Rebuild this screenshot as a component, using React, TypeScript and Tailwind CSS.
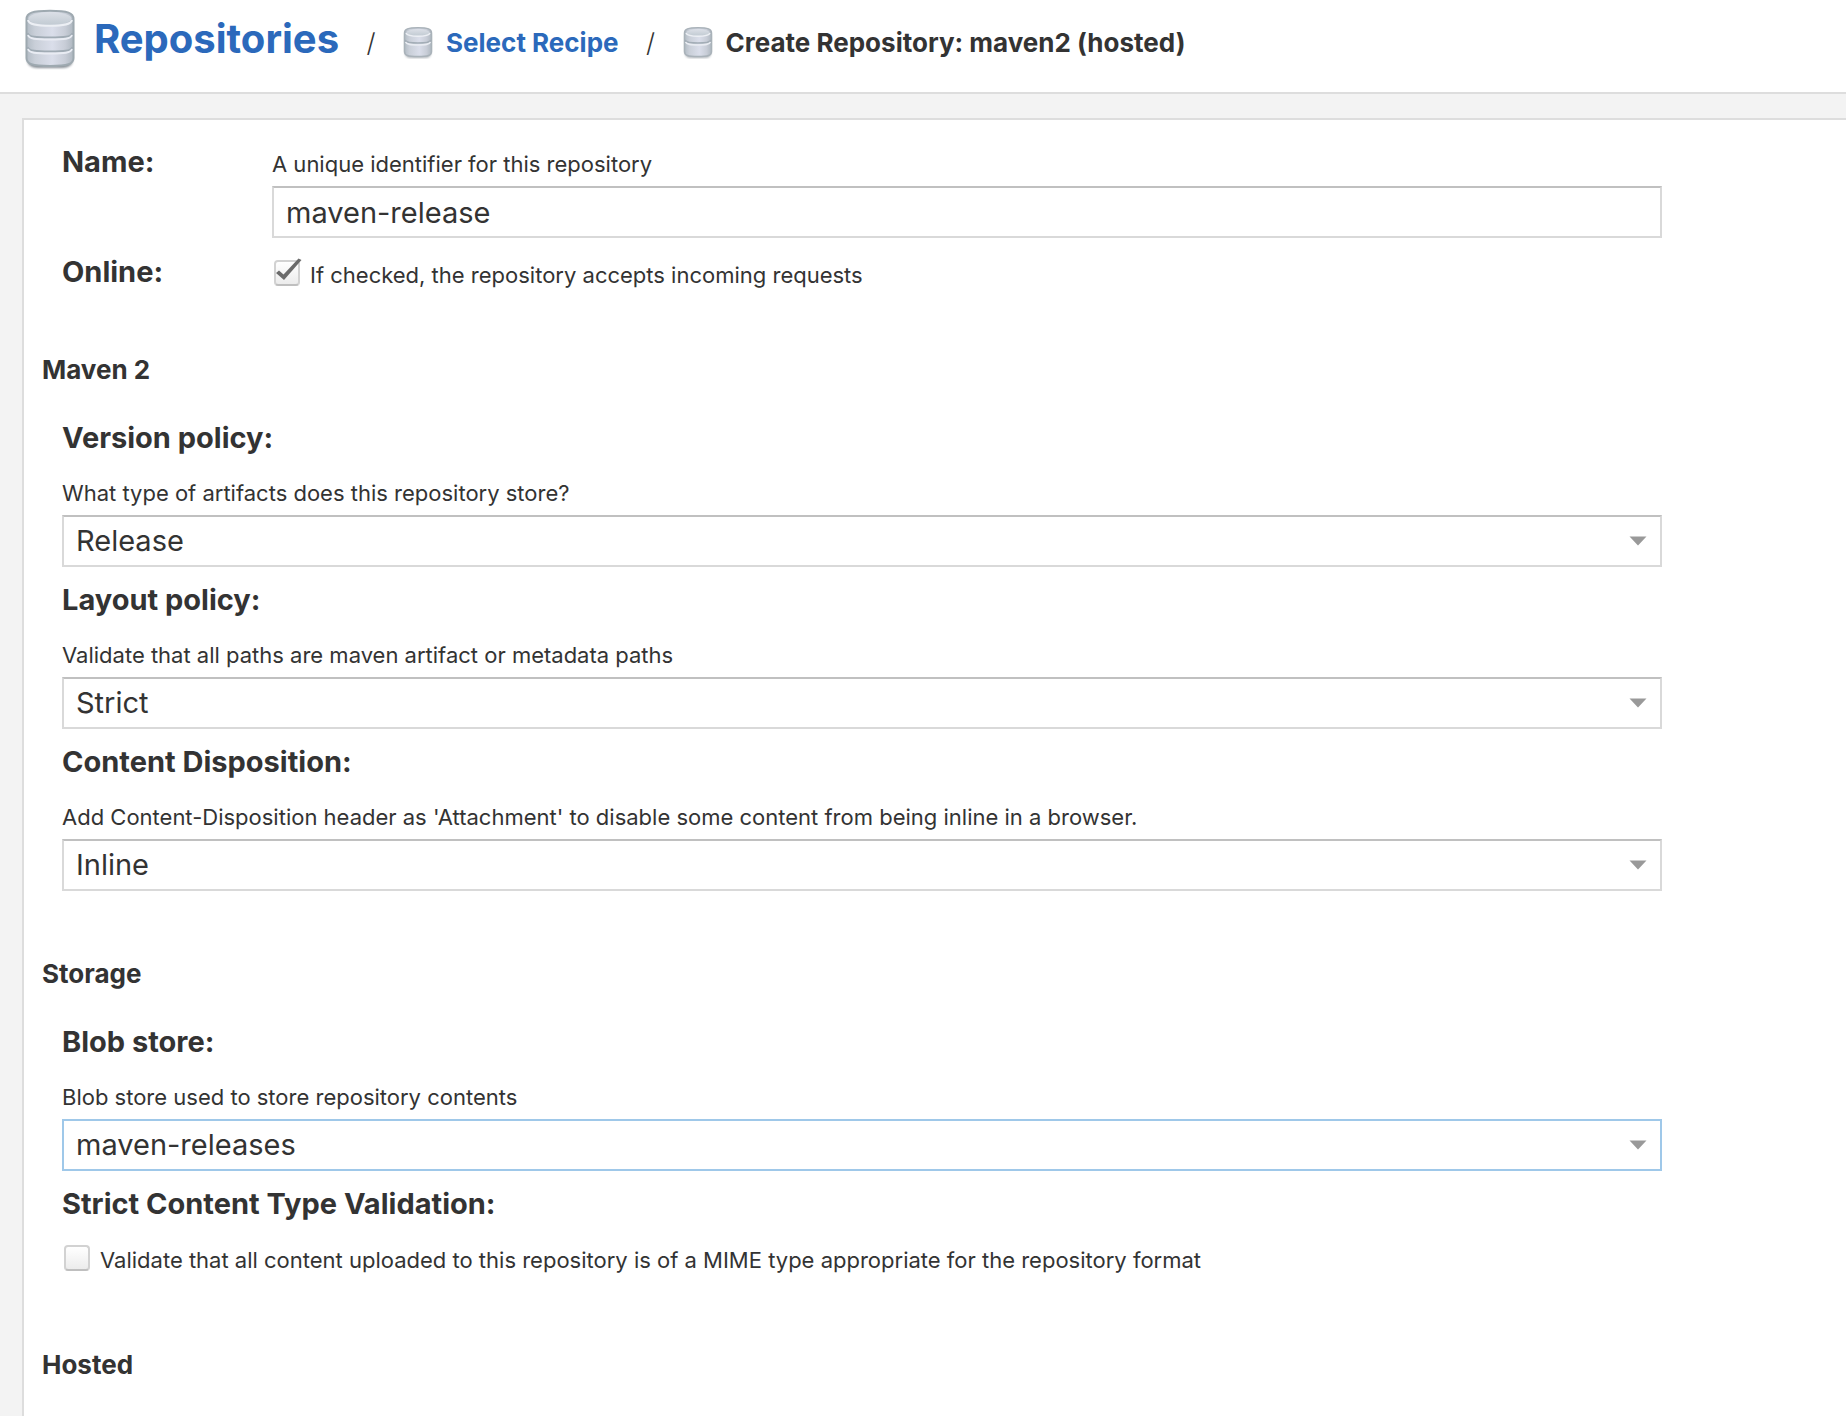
import React, { useId, useState } from "react";

function DatabaseIcon({ large = false }: { large?: boolean }) {
  const id = useId();
  const body = `${id}-body`;
  const lid = `${id}-lid`;
  const shadow = `${id}-shadow`;
  const defs = (
    <defs>
      <linearGradient id={body} x1="0" x2="1" y1="0" y2="0">
        <stop offset="0" stopColor="#b3bcc5" />
        <stop offset="0.18" stopColor="#c9cfd8" />
        <stop offset="0.55" stopColor="#dadeea" />
        <stop offset="0.82" stopColor="#c8cdd7" />
        <stop offset="1" stopColor="#aeb7c0" />
      </linearGradient>
      <linearGradient id={lid} x1="0" x2="0" y1="0" y2="1">
        <stop offset="0" stopColor="#dce0e7" />
        <stop offset="1" stopColor="#c1cad2" />
      </linearGradient>
      <filter id={shadow} x="-20%" y="-20%" width="140%" height="140%">
        <feGaussianBlur stdDeviation="1.3" />
      </filter>
    </defs>
  );
  if (large) {
    return (
      <svg aria-hidden="true" className="h-[62px] w-[52px] shrink-0" viewBox="0 0 52 62">
        {defs}
        <path d="M3 12V52Q4 60 14 60H38Q48 60 49 52V12Z" fill="#6a727b" opacity="0.8" filter={`url(#${shadow})`} />
        <path d="M2.5 11C2.5 5 8 2.8 26 2.8S49.5 5 49.5 11V50C49.5 56 44 58 26 58S2.5 56 2.5 50Z" fill={`url(#${body})`} stroke="#9ea9b0" strokeWidth="2" />
        <ellipse cx="26" cy="10.5" rx="21.5" ry="6.5" fill={`url(#${lid})`} />
        <path d="M4 12C5 16.500 12 17.800 26 17.800S47 16.500 48 12" fill="none" stroke="#eceff4" strokeWidth="2" />
        <path d="M3.500 25C5 29 12 29.500 26 29.500S47 29 48.500 25M3.500 39C5 43 12 43.500 26 43.500S47 43 48.500 39" fill="none" stroke="#a0abb4" strokeWidth="1.800" />
        <path d="M4 27C5 31 12 31.500 26 31.500S47 31 48 27M4 41C5 45 12 45.500 26 45.500S47 45 48 41" fill="none" stroke="#e9ecf3" strokeWidth="1.800" />
      </svg>
    );
  }
  return (
    <svg aria-hidden="true" className="h-8 w-[30px] shrink-0" viewBox="0 0 30 32">
      {defs}
      <path d="M2 8V26Q2 31 8 31H22Q28 31 28 26V8Z" fill="#7a828b" opacity="0.6" filter={`url(#${shadow})`} />
      <path d="M1.500 6C1.500 2 5 0.800 15 0.800S28.500 2 28.500 6V24.500C28.500 28.500 25 29.500 15 29.500S1.500 28.500 1.500 24.500Z" fill={`url(#${body})`} stroke="#a9b2b9" strokeWidth="1.500" />
      <ellipse cx="15" cy="5.500" rx="11.500" ry="3.300" fill={`url(#${lid})`} />
      <path d="M3 6C4 8.500 8 9.300 15 9.300S26 8.500 27 6" fill="none" stroke="#eceff4" strokeWidth="1.500" />
      <path d="M2 13C3 15.800 8 16 15 16S27 15.800 28 13" fill="none" stroke="#a3adb6" strokeWidth="1.500" />
      <path d="M2.500 15C3.500 17.700 8 17.900 15 17.900S26.500 17.700 27.500 15" fill="none" stroke="#e9ecf2" strokeWidth="1.500" />
    </svg>
  );
}

const fieldBox =
  "h-[52px] w-full rounded-none border-2 bg-white px-3 text-[29px] text-[#333] outline-none";
const restBorder = "border-[#d9d9d9] border-t-[#c0c0c0]";
const activeBorder = "border-[#9fc8e9]";

function CheckField({ label, initial }: { label: string; initial: boolean }) {
  const [on, setOn] = useState(initial);
  return (
    <label className="flex items-start gap-[10px] pl-[2px] text-[22px] leading-[30px]">
      <span className="relative size-[26px] shrink-0">
        <input
          type="checkbox"
          checked={on}
          onChange={(e) => setOn(e.target.checked)}
          className="block size-[26px] appearance-none rounded-[4px] border-2 border-[#d2d2d2] border-b-[#bfbfbf] bg-linear-to-b from-white to-[#ececec]"
        />
        {on && (
          <svg aria-hidden="true" className="pointer-events-none absolute -top-1 left-0 h-[30px] w-[30px]" viewBox="0 0 30 30">
            <path d="M2 17L5 14.500L9.500 18.500L24.500 2.500L27.500 4L10 24Z" fill="#6b6b6b" />
          </svg>
        )}
      </span>
      {label}
    </label>
  );
}

function SelectField({
  label,
  help,
  value,
  active = false,
}: {
  label: string;
  help: string;
  value: string;
  active?: boolean;
}) {
  const id = useId();
  return (
    <div>
      <label htmlFor={id} className="block text-[29px] leading-9 font-bold">
        {label}
      </label>
      <p id={`${id}-help`} className="mt-[23px] mb-2 text-[22px] leading-7">
        {help}
      </p>
      <div className="relative">
        <select
          id={id}
          aria-describedby={`${id}-help`}
          defaultValue={value}
          className={`${fieldBox} ${active ? activeBorder : restBorder} appearance-none`}
        >
          <option>{value}</option>
        </select>
        <svg aria-hidden="true" className="pointer-events-none absolute top-[21px] right-[15px] h-[10px] w-[18px]" viewBox="0 0 18 10">
          <path d="M0.500 0.500H17.500L9 9.500Z" fill="#999" />
        </svg>
      </div>
    </div>
  );
}

function SectionTitle({ children }: { children: string }) {
  return <h2 className="text-[26px] leading-8 font-bold">{children}</h2>;
}

export default function App() {
  return (
    <div className="flex min-h-screen flex-col bg-[#f3f3f3] font-['Inter',sans-serif] text-[#333]">
      <header className="border-b-2 border-[#ddd] bg-white pt-2 pb-[22px] pl-6">
        <nav aria-label="Breadcrumb" className="flex items-center whitespace-nowrap">
          <a href="#repositories" className="flex items-center gap-[18px] text-[40px] leading-[48px] font-bold text-[#2b69bb]">
            <DatabaseIcon large />
            Repositories
          </a>
          <div className="flex items-center pt-[7px] text-[26px] leading-8">
            <span className="w-[64px] text-center font-light">/</span>
            <a href="#recipe" className="flex items-center gap-[13px] font-bold text-[#2b69bb]">
              <DatabaseIcon />
              Select Recipe
            </a>
            <span className="w-[64px] text-center font-light">/</span>
            <span aria-current="page" className="flex items-center gap-[13px] font-bold">
              <DatabaseIcon />
              Create Repository: maven2 (hosted)
            </span>
          </div>
        </nav>
      </header>

      <main className="flex grow flex-col pt-6 pl-[22px]">
        <form className="grow border-t-2 border-l-2 border-[#ddd] bg-white pt-6 pr-6 pl-[18px]">
          <div className="ml-5 flex max-w-[1600px] flex-col gap-4">
            <div className="grid grid-cols-[210px_1fr]">
              <label htmlFor="repo-name" className="text-[29px] leading-9 font-bold">
                Name:
              </label>
              <div className="pt-[6px]">
                <p id="repo-name-help" className="mb-2 text-[22px] leading-7">
                  A unique identifier for this repository
                </p>
                <input
                  id="repo-name"
                  type="text"
                  aria-describedby="repo-name-help"
                  defaultValue="maven-release"
                  className={`${fieldBox} ${restBorder}`}
                />
              </div>
            </div>
            <div className="grid grid-cols-[210px_1fr]">
              <span className="text-[29px] leading-9 font-bold">Online:</span>
              <div className="pt-[6px]">
                <CheckField label="If checked, the repository accepts incoming requests" initial />
              </div>
            </div>
          </div>

          <section className="mt-16">
            <SectionTitle>Maven 2</SectionTitle>
            <div className="mt-[34px] ml-5 flex max-w-[1600px] flex-col gap-[15px]">
              <SelectField label="Version policy:" help="What type of artifacts does this repository store?" value="Release" />
              <SelectField label="Layout policy:" help="Validate that all paths are maven artifact or metadata paths" value="Strict" />
              <SelectField
                label="Content Disposition:"
                help="Add Content-Disposition header as 'Attachment' to disable some content from being inline in a browser."
                value="Inline"
              />
            </div>
          </section>

          <section className="mt-[67px]">
            <SectionTitle>Storage</SectionTitle>
            <div className="mt-[34px] ml-5 flex max-w-[1600px] flex-col gap-[15px]">
              <SelectField label="Blob store:" help="Blob store used to store repository contents" value="maven-releases" active />
              <div>
                <span className="mb-[23px] block text-[29px] leading-9 font-bold">Strict Content Type Validation:</span>
                <CheckField
                  label="Validate that all content uploaded to this repository is of a MIME type appropriate for the repository format"
                  initial={false}
                />
              </div>
            </div>
          </section>

          <section className="mt-[74px]">
            <SectionTitle>Hosted</SectionTitle>
          </section>
        </form>
      </main>
    </div>
  );
}
